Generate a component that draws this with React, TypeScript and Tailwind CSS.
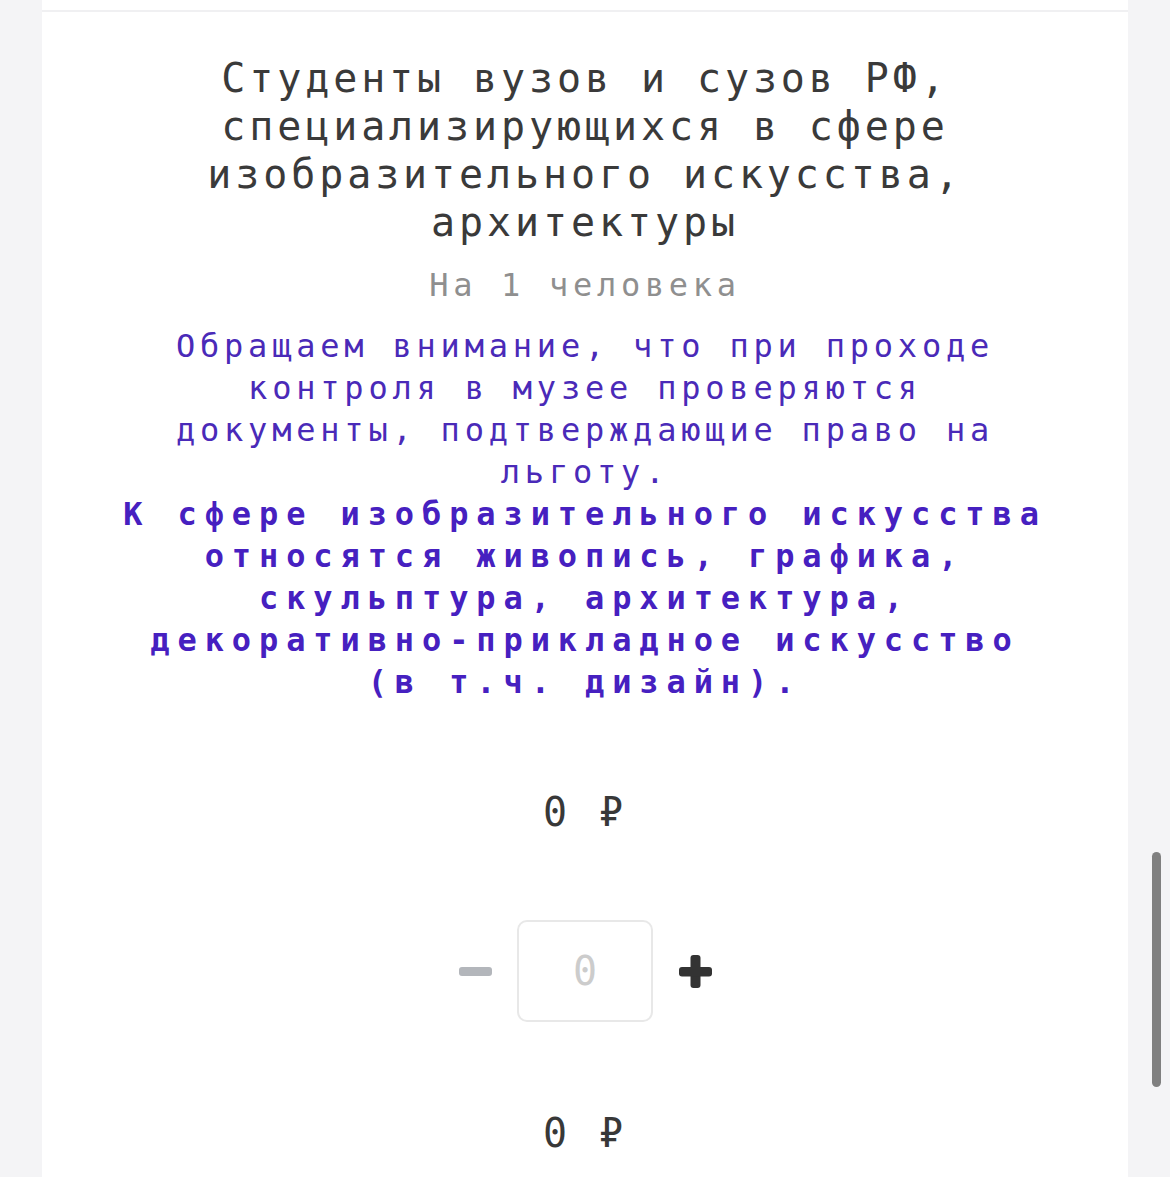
import React from 'react';

const mono = { fontFamily: '"DejaVu Sans Mono", "Liberation Mono", monospace' };

function Price() {
  return (
    <div className="text-[40px] leading-[48px] tracking-[4px] text-[#383838] text-center">
      0 ₽
    </div>
  );
}

export default function App() {
  return (
    <main className="relative h-[1177px] overflow-hidden bg-[#f4f4f6] px-[42px]" style={mono}>
      <div className="h-full bg-white">
        <div className="h-[10px]" />
        <div className="h-[2px] bg-[#f0f0f2]" />

        <div className="flex flex-col items-center text-center pt-[42px]">
          <h2 className="text-[40px] leading-[48px] tracking-[3.9px] text-[#3a3a3a] font-normal">
            Студенты вузов и сузов РФ,<br />
            специализирующихся в сфере<br />
            изобразительного искусства,<br />
            архитектуры
          </h2>

          <p className="mt-[19px] text-[32px] leading-[40px] tracking-[4.7px] text-[#8f8f8f]">
            На 1 человека
          </p>

          <div className="mt-[20px] text-[32px] leading-[42px]">
            <p className="tracking-[4.8px] text-[#4a2ab8]">
              Обращаем внимание, что при проходе<br />
              контроля в музее проверяются<br />
              документы, подтверждающие право на<br />
              льготу.
            </p>
            <p className="font-bold tracking-[7.9px] text-[#4620c0]">
              К сфере изобразительного искусства<br />
              относятся живопись, графика,<br />
              скульптура, архитектура,<br />
              декоративно-прикладное искусство<br />
              (в т.ч. дизайн).
            </p>
          </div>

          <div className="mt-[85px]">
            <Price />
          </div>

          <div className="mt-[84px] flex items-center gap-[25px]">
            <button className="flex h-[34px] w-[34px] items-center justify-center">
              <span className="block h-[9px] w-[33px] rounded-[3px] bg-[#b3b6bb]" />
            </button>
            <div className="flex h-[102px] w-[136px] items-center justify-center rounded-[10px] border-2 border-[#e8e8e8] text-[40px] text-[#cccccc]">
              0
            </div>
            <button className="flex h-[34px] w-[34px] items-center justify-center">
              <svg width="33" height="33" viewBox="0 0 33 33">
                <rect x="11.5" y="0" width="10" height="33" rx="3" fill="#333333" />
                <rect x="0" y="12" width="33" height="9.5" rx="3" fill="#333333" />
              </svg>
            </button>
          </div>

          <div className="mt-[87px]">
            <Price />
          </div>
        </div>
      </div>

      <div className="absolute right-[9px] top-[852px] h-[235px] w-[9px] rounded-full bg-[#808080]" />
    </main>
  );
}
